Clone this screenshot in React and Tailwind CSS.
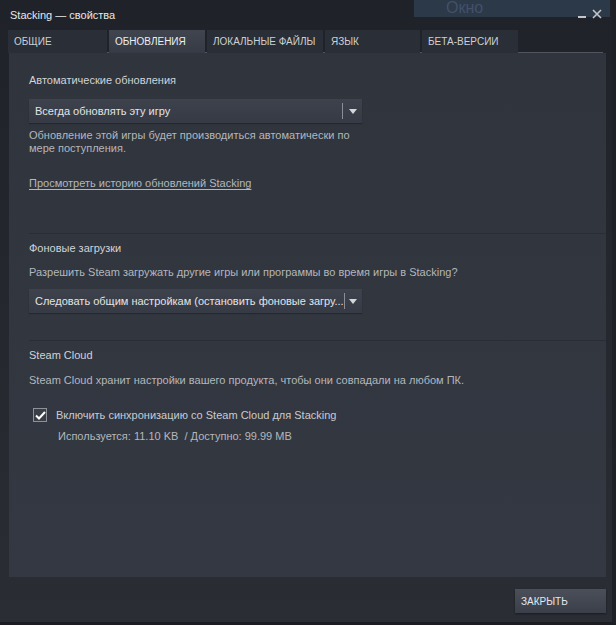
import React from 'react';

const tabs = [
  { label: 'ОБЩИЕ', w: 'w-[99px]' },
  { label: 'ОБНОВЛЕНИЯ', w: 'w-[96px]', active: true },
  { label: 'ЛОКАЛЬНЫЕ ФАЙЛЫ', w: 'w-[116px]' },
  { label: 'ЯЗЫК', w: 'w-[95px]' },
  { label: 'БЕТА-ВЕРСИИ', w: 'w-[96px]' },
];

const Dropdown = ({ text }) => (
  <div className="flex items-center w-[333px] h-[24px] bg-gradient-to-b from-[#3d424c] to-[#363a44] shadow-[0_1px_1px_rgba(0,0,0,0.25)]">
    <span className="flex-1 pl-[6px] text-[11px] text-[#e2e4e6] whitespace-nowrap">{text}</span>
    <span className="w-px h-[16px] bg-[#8a8e96]" />
    <span className="w-[19px] flex justify-center">
      <svg width="8" height="5" viewBox="0 0 8 5">
        <path d="M0 0 H8 L4 5 Z" fill="#d4d6da" />
      </svg>
    </span>
  </div>
);

const Divider = () => <div className="h-px bg-[#454a54] border-b border-[#2a2d34]" />;

export default function App() {
  return (
    <div
      className="w-[616px] h-[625px] flex flex-col bg-gradient-to-b from-[#1f2228] to-[#2a2d34] border-r-[4px] border-r-[#1e2126] border-b-[3px] border-b-[#1b1d22] overflow-hidden"
      style={{ fontFamily: '"Liberation Sans", Arial, sans-serif' }}
    >
      {/* Title bar */}
      <div className="relative h-[30px] shrink-0">
        <div className="absolute left-[414px] top-0 w-[196px] h-[17px] bg-[#2c3949] pl-[32px]">
          <span className="block text-[16px] leading-[16px] text-[#42506a]">Окно</span>
        </div>
        <div className="absolute left-[10px] top-[9px] text-[11px] leading-[13px] text-[#e6e8ea]">Stacking — свойства</div>
        <div className="absolute right-[10px] top-[9px] flex items-end gap-[6px]">
          <span className="w-[8px] h-[2px] bg-[#c3c6cc] mb-[1px]" />
          <svg width="10" height="10" viewBox="0 0 10 10">
            <path d="M1 1 L9 9 M9 1 L1 9" stroke="#c3c6cc" strokeWidth="1.6" />
          </svg>
        </div>
      </div>

      {/* Tabs */}
      <div className="flex ml-[8px] mr-[9px] h-[23px] shrink-0 gap-[2px] border-b border-[#50555f]">
        {tabs.map((t) => (
          <div
            key={t.label}
            className={`${t.w} flex items-center pl-[6px] text-[10px] whitespace-nowrap ${
              t.active
                ? 'bg-gradient-to-b from-[#40454f] to-[#353a44] text-[#eceef0] -mb-px h-[24px] border-b border-[#353a44]'
                : 'h-[23px] bg-[#2a2e36] text-[#cdd0d4]'
            }`}
          >
            {t.label}
          </div>
        ))}
      </div>

      {/* Panel */}
      <div className="ml-[9px] mr-[6px] h-[524px] shrink-0 bg-gradient-to-b from-[#30343c] to-[#343842] pl-[20px] pt-[20px]">
        <div className="text-[11px] leading-[14px] text-[#d0d3d7]">Автоматические обновления</div>
        <div className="mt-[12px]">
          <Dropdown text="Всегда обновлять эту игру" />
        </div>
        <div className="mt-[6px] text-[11px] leading-[13px] text-[#b3b7bd] w-[340px]">
          Обновление этой игры будет производиться автоматически по мере поступления.
        </div>
        <div className="mt-[21px] text-[11px] leading-[14px] text-[#b3b7bd] underline underline-offset-2">
          Просмотреть историю обновлений Stacking
        </div>
        <div className="mt-[43px]">
          <Divider />
        </div>

        <div className="mt-[7px] text-[11px] leading-[14px] text-[#d0d3d7]">Фоновые загрузки</div>
        <div className="mt-[10px] text-[11px] leading-[14px] text-[#b3b7bd]">
          Разрешить Steam загружать другие игры или программы во время игры в Stacking?
        </div>
        <div className="mt-[10px]">
          <Dropdown text="Следовать общим настройкам (остановить фоновые загру..." />
        </div>
        <div className="mt-[27px]">
          <Divider />
        </div>

        <div className="mt-[7px] text-[11px] leading-[14px] text-[#d0d3d7]">Steam Cloud</div>
        <div className="mt-[11px] text-[11px] leading-[14px] text-[#b3b7bd]">
          Steam Cloud хранит настройки вашего продукта, чтобы они совпадали на любом ПК.
        </div>
        <div className="mt-[21px] ml-[4px] flex items-center gap-[9px]">
          <span className="w-[14px] h-[14px] border border-[#8d929a] bg-[#3a3e47] flex items-center justify-center">
            <svg width="11" height="9" viewBox="0 0 11 9">
              <path d="M1 4.5 L4 7.5 L10 1" fill="none" stroke="#ffffff" strokeWidth="2" />
            </svg>
          </span>
          <span className="text-[11px] leading-[14px] text-[#c8cbd0]">
            Включить синхронизацию со Steam Cloud для Stacking
          </span>
        </div>
        <div className="mt-[7px] ml-[29px] text-[11px] leading-[14px] text-[#b3b7bd] whitespace-pre">
          Используется: 11.10 KB  / Доступно: 99.99 MB
        </div>
      </div>

      {/* Footer */}
      <div className="flex justify-end pr-[6px] pt-[12px]">
        <div className="w-[91px] h-[24px] bg-gradient-to-b from-[#4a4f5a] to-[#3b3f49] flex items-center pl-[6px] text-[10px] text-[#e6e8ea] shadow-[0_1px_2px_rgba(0,0,0,0.4)]">
          ЗАКРЫТЬ
        </div>
      </div>
    </div>
  );
}
